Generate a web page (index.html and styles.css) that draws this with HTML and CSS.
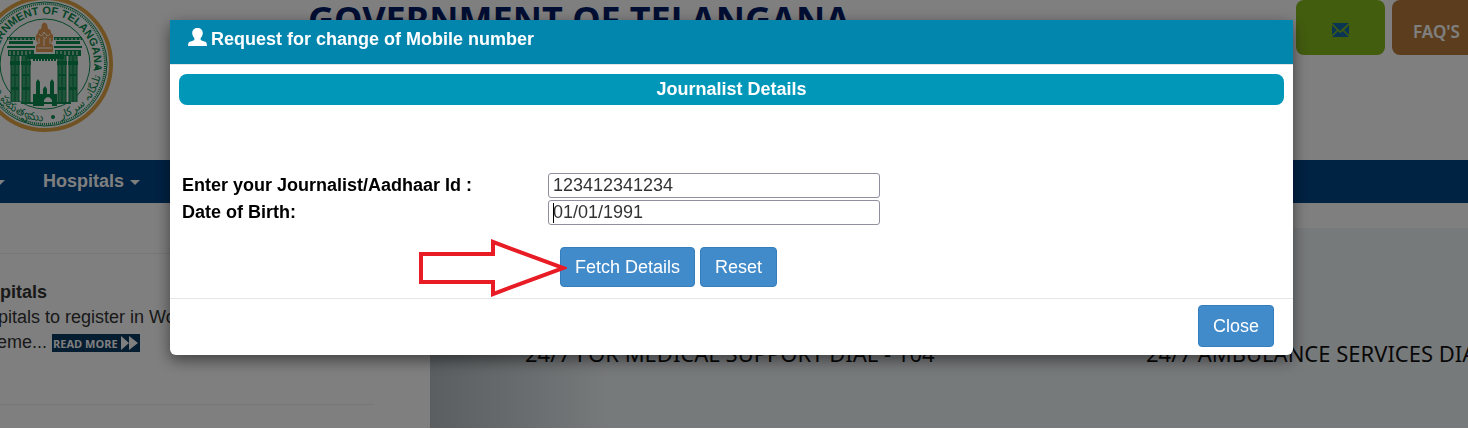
FILE: index.html
```html
<!DOCTYPE html>
<html lang="en">
<head>
    <meta charset="UTF-8">
    <meta name="viewport" content="width=device-width, initial-scale=1.0">
    <title>Government of Telangana</title>
    <link rel="stylesheet" href="styles.css">
</head>
<body>
    <div class="page">
        <!-- Header -->
        <header class="header">
            <svg class="seal" width="113" height="133" viewBox="0 0 113 133" role="img" aria-label="Government of Telangana seal">
                <defs>
                    <path id="arc-top" d="M-3 73 A49 49 0 1 1 93 73"/>
                    <path id="arc-bottom" d="M-12 64 A57 57 0 0 0 102 64"/>
                    <g id="pillar">
                        <path d="M0 37h28v3H0zM2 41h24v3H2zM0 46h28v2H0zM1 50h26v6H1z"/>
                        <path d="M4 56h8v46H4zM15 56h8v46h-8z" fill="#3aa874"/>
                        <path d="M4 56v46M8 56v46M12 56v46M15 56v46M19 56v46M23 56v46" stroke="#0b7d48" fill="none"/>
                        <path d="M3 61h10v4H3zM14 61h10v4H14zM4 74h8v2H4zM15 74h8v2h-8zM4 87h8v3H4zM15 87h8v3h-8z"/>
                        <path d="M1 39h26M2 52h24M2 54h24" stroke="#fff" stroke-dasharray="2 2" fill="none"/>
                    </g>
                </defs>
                <circle cx="45" cy="64" r="66" fill="#fff" stroke="#e3a544" stroke-width="4"/>
                <circle cx="45" cy="64" r="62" fill="none" stroke="#0b8a50" stroke-width="1"/>
                <circle cx="45" cy="64" r="60" fill="none" stroke="#0b8a50" stroke-width="2" stroke-dasharray="1 1"/>
                <circle cx="45" cy="64" r="45" fill="none" stroke="#0b8a50" stroke-width="1"/>
                <g fill="#0b8a50">
                    <text class="seal-name"><textPath href="#arc-top" startOffset="50%" text-anchor="middle">GOVERNMENT OF TELANGANA</textPath></text>
                    <text class="seal-local"><textPath href="#arc-bottom" startOffset="49%" text-anchor="end">తెలంగాణ ప్రభుత్వము</textPath></text>
                    <text class="seal-local"><textPath href="#arc-bottom" startOffset="76%" text-anchor="middle">تلنگانہ سرکار</textPath></text>
                    <circle cx="97" cy="68" r="2"/>
                    <circle cx="53" cy="117" r="2"/>
                    <use href="#pillar" x="7"/>
                    <use href="#pillar" x="54"/>
                    <path d="M27 54h37v5H27z"/>
                    <path d="M33 60h24" stroke="#0b8a50" stroke-width="2" stroke-dasharray="2 1"/>
                    <path d="M33 106V94h3V82l2-3 2 3v12h3v-5l2-3 2 3v5h3V82l2-3 2 3v12h3v12h-5v-6q-4-6-8 0v6zM21 102h50v2H21z"/>
                </g>
                <g fill="#e59a55">
                    <path d="M36 52h17v-6l-2-3q3-3 2-8l-2-2q0-4-3-4l-1-5q-3-3-5 0l-1 5q-3 0-3 4l-2 2q-1 5 2 8l-2 3z"/>
                    <path d="M39 34q3 4 5-2 3 6 6 2M39 38v6M50 38v6M43 37q2 3 4 0M37 48h15M44 39v7" stroke="#fff" fill="none"/>
                </g>
            </svg>
            <h1 class="site-title">GOVERNMENT OF TELANGANA</h1>
            <div class="quick-links">
                <a href="#" class="quick-link mail" aria-label="Mail">
                    <svg width="17" height="14" viewBox="0 0 17 14">
                        <path d="M0 0h17L8 8zM0 2l5 5-5 5zM17 2l-5 5 5 5zM0 14l6-6 2 2 3-2 6 6z" fill="#156ca8"/>
                    </svg>
                </a>
                <a href="#" class="quick-link faq">FAQ'S</a>
            </div>
        </header>

        <!-- Navigation -->
        <nav class="navbar">
            <a href="#">Network <span class="arrow-down"></span></a>
            <a href="#">Hospitals <span class="arrow-down"></span></a>
        </nav>

        <!-- News and banner -->
        <div class="content">
            <div class="news">
                <div class="news-item">
                    <h2>Hospitals</h2>
                    <p>Hospitals to register in Workers<br>
                    Scheme... <a href="#" class="read-more">READ MORE<svg width="17" height="14" viewBox="0 0 17 14"><path d="M0 0l8 7-8 7zM8 0l9 7-9 7z" fill="currentColor"/></svg></a></p>
                </div>
            </div>
            <div class="banner">
                <p>24/7 FOR MEDICAL SUPPORT DIAL - 104</p>
                <p>24/7 AMBULANCE SERVICES DIAL - 108</p>
            </div>
        </div>
    </div>

    <!-- Modal -->
    <div class="modal-backdrop">
        <div class="modal" role="dialog" aria-labelledby="modal-title">
            <div class="modal-header">
                <svg width="19" height="18" viewBox="0 0 18 18" preserveAspectRatio="none">
                    <path d="M9 0c3 0 5 2 5 5 0 2-1 4-2 5v2c1 1 3 1 5 2q1 1 1 4H0q0-3 1-4c2-1 4-1 5-2v-2C5 9 4 7 4 5c0-3 2-5 5-5z" fill="currentColor"/>
                </svg>
                <h2 id="modal-title">Request for change of Mobile number</h2>
            </div>
            <form class="modal-body">
                <h3 class="section-title">Journalist Details</h3>
                <div class="fields">
                    <label for="journalist-id">Enter your Journalist/Aadhaar Id :</label>
                    <input type="text" id="journalist-id" value="123412341234">
                    <label for="dob">Date of Birth:</label>
                    <div class="focused-field">
                        <input type="text" id="dob" value="01/01/1991">
                        <span class="caret"></span>
                    </div>
                </div>
                <div class="actions">
                    <button type="button" class="btn">Fetch Details</button>
                    <button type="reset" class="btn">Reset</button>
                    <svg class="pointer" width="150" height="60" viewBox="0 0 150 60">
                        <path d="M4 16h72V4l70 26-70 26V44H4z" fill="none" stroke="#e81c24" stroke-width="4"/>
                    </svg>
                </div>
            </form>
            <div class="modal-footer">
                <button type="button" class="btn btn-close">Close</button>
            </div>
        </div>
    </div>
</body>
</html>
```
FILE: styles.css
```css
* {
    box-sizing: border-box;
}

body {
    font-family: "Liberation Sans", Arial, sans-serif;
    font-size: 18px;
    line-height: 25px;
    color: #333;
    background-color: #fff;
    margin: 0;
    overflow: hidden;
}

h1, h2, h3, p {
    margin: 0;
    font-size: 18px;
}

a {
    text-decoration: none;
}

.page {
    overflow: hidden;
}

/* Header */
.header {
    display: flex;
    align-items: flex-start;
    height: 160px;
}

.seal {
    flex-shrink: 0;
}

.seal-name {
    font-size: 11px;
    font-weight: bold;
}

.seal-local {
    font-family: "DejaVu Sans", sans-serif;
    font-size: 11px;
}

.site-title {
    font-family: "Noto Sans", sans-serif;
    font-size: 36px;
    line-height: 40px;
    color: #001c66;
    margin-left: 195px;
    white-space: nowrap;
}

.quick-links {
    display: flex;
    gap: 7px;
    margin-left: auto;
}

.quick-link {
    display: flex;
    align-items: center;
    justify-content: center;
    width: 89px;
    height: 55px;
    border-radius: 8px;
    font-family: "Noto Sans", sans-serif;
    font-size: 17px;
    font-weight: 600;
    color: #fff;
}

.mail {
    background-color: #86ba1e;
    padding-top: 4px;
}

.faq {
    background-color: #b87d3c;
    margin-right: -13px;
    padding-top: 8px;
}

/* Navigation */
.navbar {
    display: flex;
    gap: 38px;
    margin-left: -82px;
    height: 43px;
    align-items: center;
    background-color: #004587;
}

.navbar a {
    color: #fff;
    font-weight: bold;
}

.arrow-down {
    display: inline-block;
    margin-left: 1px;
    vertical-align: middle;
    border: 5px solid transparent;
    border-top-color: #fff;
    border-bottom: 0;
}

/* News and banner */
.content {
    display: flex;
    height: 225px;
    padding-top: 25px;
}

.news {
    width: 374px;
    margin-top: 25px;
    margin-right: 56px;
    flex-shrink: 0;
}

.news-item {
    height: 152px;
    padding-top: 26px;
    border-top: 1px solid #eee;
    border-bottom: 1px solid #eee;
    color: #333;
}

.news-item h2,
.news-item p {
    margin-left: -34px;
    white-space: nowrap;
}

.read-more {
    display: inline-flex;
    align-items: center;
    justify-content: space-between;
    vertical-align: middle;
    width: 88px;
    height: 18px;
    padding: 0 2px 0 1px;
    background-color: #0a3a63;
    color: #fff;
    font-family: "Open Sans", sans-serif;
    font-size: 11px;
    font-weight: bold;
}

.banner {
    flex: 1;
    display: grid;
    grid-template-columns: 621px 1fr;
    padding: 111px 0 0 95px;
    background: linear-gradient(90deg, #b5bdc1, #eff4f7 180px);
    color: #111;
    font-family: "Noto Sans", sans-serif;
    white-space: nowrap;
    overflow: hidden;
}

.banner p {
    font-size: 22px;
    line-height: 28px;
}

/* Modal */
.modal-backdrop {
    position: fixed;
    inset: 0 0 1px;
    padding: 20px 175px 0 170px;
    background-color: rgba(0, 0, 0, 0.5);
    overflow: hidden;
}

.modal {
    background-color: #fff;
    border-radius: 6px;
    box-shadow: 0 5px 15px rgba(0, 0, 0, 0.5);
}

.modal-header {
    display: flex;
    gap: 4px;
    height: 45px;
    padding: 8px 18px;
    color: #fff;
    background-color: #0286ae;
    border-bottom: 1px solid #e5e5e5;
}

.modal-header h2 {
    line-height: 22px;
}

.modal-body {
    padding: 9px 9px 11px;
}

.section-title {
    padding: 3px;
    border-radius: 8px;
    text-align: center;
    color: #fff;
    background-color: #0097b8;
    line-height: 25px;
}

.fields {
    display: grid;
    grid-template-columns: 364px 332px;
    gap: 2px;
    margin: 68px 0 0 3px;
    font-weight: bold;
    color: #000;
}

.fields input {
    display: block;
    width: 100%;
    height: 25px;
    padding: 0 4px;
    border: 1px solid #8f8f9d;
    border-radius: 3px;
    font-family: inherit;
    font-size: 18px;
    color: #333;
}

.focused-field {
    position: relative;
}

.caret {
    position: absolute;
    left: 5px;
    top: 3px;
    width: 1px;
    height: 20px;
    background-color: #000;
}

.actions {
    position: relative;
    display: flex;
    gap: 5px;
    margin: 22px 0 0 381px;
}

.btn {
    height: 40px;
    padding: 0 14px;
    border: 1px solid #357ebd;
    border-radius: 4px;
    background-color: #428bca;
    color: #fff;
    font-family: inherit;
    font-size: 18px;
    cursor: pointer;
}

.btn:hover {
    background-color: #3276b1;
}

.pointer {
    position: absolute;
    left: -143px;
    top: -9px;
}

.modal-footer {
    display: flex;
    justify-content: flex-end;
    padding: 6px 19px 8px;
    border-top: 1px solid #e5e5e5;
}

.btn-close {
    height: 42px;
}
```
